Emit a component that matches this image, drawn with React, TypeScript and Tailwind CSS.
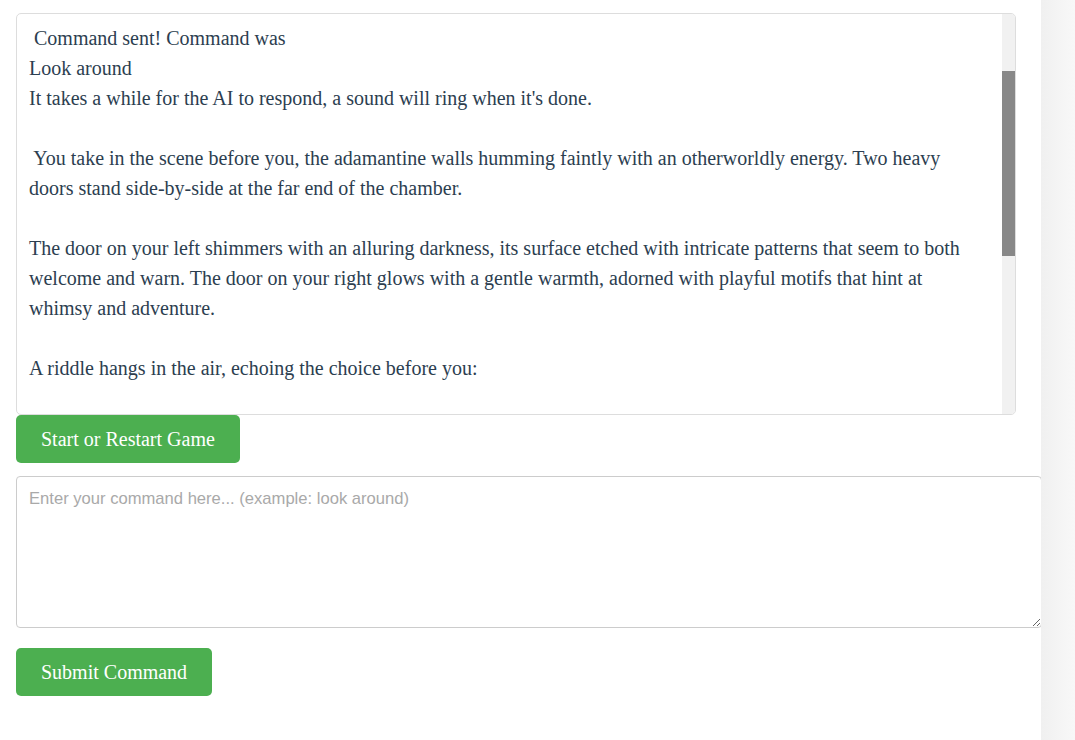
const lines = [
  " Command sent! Command was",
  "Look around",
  "It takes a while for the AI to respond, a sound will ring when it's done.",
  "",
  " You take in the scene before you, the adamantine walls humming faintly with an otherworldly energy. Two heavy",
  "doors stand side-by-side at the far end of the chamber.",
  "",
  "The door on your left shimmers with an alluring darkness, its surface etched with intricate patterns that seem to both",
  "welcome and warn. The door on your right glows with a gentle warmth, adorned with playful motifs that hint at",
  "whimsy and adventure.",
  "",
  "A riddle hangs in the air, echoing the choice before you:",
  "",
  "",
];

export default function App() {
  return (
    <div className="flex min-h-screen bg-white font-['Liberation_Serif',serif]">
      <div className="flex-1 pl-4 pt-[13px]">
        <div className="w-[1000px]">
          <div className="flex h-[402px] rounded-[5px] border border-[#ddd] overflow-hidden">
            <div className="flex-1 overflow-hidden pl-3 pt-[9px] text-[20px] leading-[30px] text-[#2c3e50]">
              {lines.map((line, i) => (
                <div key={i} className="whitespace-pre h-[30px]">{line}</div>
              ))}
            </div>
            <div className="w-[13px] bg-[#f1f1f1]">
              <div className="mt-[57px] h-[185px] bg-[#888]" />
            </div>
          </div>

          <button className="h-12 rounded-[5px] bg-[#4CAF50] px-[25px] text-[20px] text-white cursor-pointer">
            Start or Restart Game
          </button>

          <textarea
            placeholder="Enter your command here... (example: look around)"
            className="mt-[13px] block box-content w-full h-[126px] rounded-[4px] border border-[#ccc] px-3 py-3 font-['Liberation_Sans',sans-serif] text-[16.6px] leading-[20px] text-[#333] placeholder:text-[#a9a9a9] outline-none"
          />

          <button className="mt-5 h-12 rounded-[5px] bg-[#4CAF50] px-[25px] text-[20px] text-white cursor-pointer">
            Submit Command
          </button>
        </div>
      </div>
      <div className="w-[34px] shrink-0 bg-gradient-to-r from-[#f0f0f0] to-[#f8f8f8]" />
    </div>
  );
}
